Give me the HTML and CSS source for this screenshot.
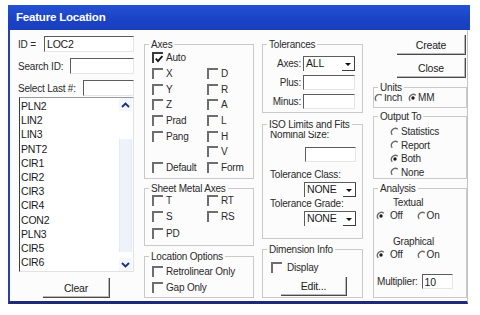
FILE: index.html
```html
<!DOCTYPE html>
<html>
<head>
<meta charset="utf-8">
<title>Feature Location</title>
<link rel="stylesheet" href="styles.css">
</head>
<body>
<div class="window">
  <div class="titlebar">Feature Location</div>
  <div class="client">
    <!-- column 1 -->
    <div class="col col1">
      <div class="field f-id"><span class="lbl">ID =</span><span class="edit w-id">LOC2</span></div>
      <div class="field f-search"><span class="lbl">Search ID:</span><span class="edit w-search"></span></div>
      <div class="field f-last"><span class="lbl">Select Last #:</span><span class="edit w-last"></span></div>
      <div class="listbox">
        <ul class="items">
          <li>PLN2</li><li>LIN2</li><li>LIN3</li><li>PNT2</li><li>CIR1</li><li>CIR2</li>
          <li>CIR3</li><li>CIR4</li><li>CON2</li><li>PLN3</li><li>CIR5</li><li>CIR6</li>
        </ul>
        <div class="scrollbar">
          <span class="sb-btn"><svg width="9" height="6" viewBox="0 0 9 6"><path d="M1 5 L4.5 1.5 L8 5" fill="none" stroke="#1b2f7a" stroke-width="1.8"/></svg></span>
          <span class="sb-track"><span class="sb-thumb"></span></span>
          <span class="sb-btn"><svg width="9" height="6" viewBox="0 0 9 6"><path d="M1 1 L4.5 4.5 L8 1" fill="none" stroke="#1b2f7a" stroke-width="1.8"/></svg></span>
        </div>
      </div>
      <div class="btn btn-clear">Clear</div>
    </div>

    <!-- column 2 -->
    <div class="col col2">
      <div class="group g-axes">
        <span class="legend">Axes</span>
        <div class="cb-grid axes-grid">
          <label class="opt span2"><span class="cb checked"><svg width="8" height="8" viewBox="0 0 8 8"><path d="M0.8 3.6 L3 6.2 L7.4 1" fill="none" stroke="#111" stroke-width="1.8"/></svg></span>Auto</label>
          <label class="opt"><span class="cb"></span>X</label>
          <label class="opt"><span class="cb"></span>D</label>
          <label class="opt"><span class="cb"></span>Y</label>
          <label class="opt"><span class="cb"></span>R</label>
          <label class="opt"><span class="cb"></span>Z</label>
          <label class="opt"><span class="cb"></span>A</label>
          <label class="opt"><span class="cb"></span>Prad</label>
          <label class="opt"><span class="cb"></span>L</label>
          <label class="opt"><span class="cb"></span>Pang</label>
          <label class="opt"><span class="cb"></span>H</label>
          <span class="opt"></span>
          <label class="opt"><span class="cb"></span>V</label>
          <label class="opt"><span class="cb"></span>Default</label>
          <label class="opt"><span class="cb"></span>Form</label>
        </div>
      </div>
      <div class="group g-sheet">
        <span class="legend">Sheet Metal Axes</span>
        <div class="cb-grid sheet-grid">
          <label class="opt"><span class="cb"></span>T</label>
          <label class="opt"><span class="cb"></span>RT</label>
          <label class="opt"><span class="cb"></span>S</label>
          <label class="opt"><span class="cb"></span>RS</label>
          <label class="opt"><span class="cb"></span>PD</label>
        </div>
      </div>
      <div class="group g-loc">
        <span class="legend">Location Options</span>
        <div class="cb-list">
          <label class="opt"><span class="cb"></span>Retrolinear Only</label>
          <label class="opt"><span class="cb"></span>Gap Only</label>
        </div>
      </div>
    </div>

    <!-- column 3 -->
    <div class="col col3">
      <div class="group g-tol">
        <span class="legend">Tolerances</span>
        <div class="tol-grid">
          <span class="rlbl">Axes:</span>
          <span class="combo"><span class="combo-text">ALL</span><span class="combo-btn"><span class="tri"></span></span></span>
          <span class="rlbl">Plus:</span>
          <span class="edit w-tol"></span>
          <span class="rlbl">Minus:</span>
          <span class="edit w-tol"></span>
        </div>
      </div>
      <div class="group g-iso">
        <span class="legend">ISO Limits and Fits</span>
        <div class="iso-body">
          <span class="iso-lbl">Nominal Size:</span>
          <span class="edit w-nom"></span>
          <span class="iso-lbl l-class">Tolerance Class:</span>
          <span class="combo"><span class="combo-text">NONE</span><span class="combo-btn"><span class="tri"></span></span></span>
          <span class="iso-lbl l-grade">Tolerance Grade:</span>
          <span class="combo"><span class="combo-text">NONE</span><span class="combo-btn"><span class="tri"></span></span></span>
        </div>
      </div>
      <div class="group g-dim">
        <span class="legend">Dimension Info</span>
        <label class="opt dim-opt"><span class="cb"></span>Display</label>
        <div class="btn btn-edit">Edit...</div>
      </div>
    </div>

    <!-- column 4 -->
    <div class="col col4">
      <div class="btn btn-side">Create</div>
      <div class="btn btn-side btn-close">Close</div>
      <div class="group g-units">
        <span class="legend">Units</span>
        <div class="units-row">
          <label class="ropt"><span class="rb"><svg width="10" height="10" viewBox="0 0 10 10"><path d="M7.8 2.2 A4 4 0 0 0 2.2 7.8" fill="none" stroke="#6a6a6a" stroke-width="1.3"/></svg></span>Inch</label>
          <label class="ropt r-mm"><span class="rb"><svg width="10" height="10" viewBox="0 0 10 10"><path d="M7.8 2.2 A4 4 0 0 0 2.2 7.8" fill="none" stroke="#6a6a6a" stroke-width="1.3"/><circle cx="5" cy="5" r="1.7" fill="#1a1a1a"/></svg></span>MM</label>
        </div>
      </div>
      <div class="group g-out">
        <span class="legend">Output To</span>
        <div class="out-list">
          <label class="ropt"><span class="rb"><svg width="10" height="10" viewBox="0 0 10 10"><path d="M7.8 2.2 A4 4 0 0 0 2.2 7.8" fill="none" stroke="#6a6a6a" stroke-width="1.3"/></svg></span>Statistics</label>
          <label class="ropt"><span class="rb"><svg width="10" height="10" viewBox="0 0 10 10"><path d="M7.8 2.2 A4 4 0 0 0 2.2 7.8" fill="none" stroke="#6a6a6a" stroke-width="1.3"/></svg></span>Report</label>
          <label class="ropt"><span class="rb"><svg width="10" height="10" viewBox="0 0 10 10"><path d="M7.8 2.2 A4 4 0 0 0 2.2 7.8" fill="none" stroke="#6a6a6a" stroke-width="1.3"/><circle cx="5" cy="5" r="1.7" fill="#1a1a1a"/></svg></span>Both</label>
          <label class="ropt"><span class="rb"><svg width="10" height="10" viewBox="0 0 10 10"><path d="M7.8 2.2 A4 4 0 0 0 2.2 7.8" fill="none" stroke="#6a6a6a" stroke-width="1.3"/></svg></span>None</label>
        </div>
      </div>
      <div class="group g-an">
        <span class="legend">Analysis</span>
        <div class="an-head">Textual</div>
        <div class="an-row">
          <label class="ropt r-off"><span class="rb"><svg width="10" height="10" viewBox="0 0 10 10"><path d="M7.8 2.2 A4 4 0 0 0 2.2 7.8" fill="none" stroke="#6a6a6a" stroke-width="1.3"/><circle cx="5" cy="5" r="1.7" fill="#1a1a1a"/></svg></span>Off</label>
          <label class="ropt r-on"><span class="rb"><svg width="10" height="10" viewBox="0 0 10 10"><path d="M7.8 2.2 A4 4 0 0 0 2.2 7.8" fill="none" stroke="#6a6a6a" stroke-width="1.3"/></svg></span>On</label>
        </div>
        <div class="an-head an-graph">Graphical</div>
        <div class="an-row">
          <label class="ropt r-off"><span class="rb"><svg width="10" height="10" viewBox="0 0 10 10"><path d="M7.8 2.2 A4 4 0 0 0 2.2 7.8" fill="none" stroke="#6a6a6a" stroke-width="1.3"/><circle cx="5" cy="5" r="1.7" fill="#1a1a1a"/></svg></span>Off</label>
          <label class="ropt r-on"><span class="rb"><svg width="10" height="10" viewBox="0 0 10 10"><path d="M7.8 2.2 A4 4 0 0 0 2.2 7.8" fill="none" stroke="#6a6a6a" stroke-width="1.3"/></svg></span>On</label>
        </div>
        <div class="mult-row"><span class="lbl">Multiplier:</span><span class="edit w-mult">10</span></div>
      </div>
    </div>
  </div>
</div>
</body>
</html>
```

FILE: styles.css
```css
* { box-sizing: border-box; }

html, body {
  margin: 0;
  padding: 0;
  background: #ffffff;
}

body {
  font-family: "Liberation Sans", Arial, sans-serif;
  font-size: 10px;
  letter-spacing: -0.2px;
  color: #2a2a2a;
  width: 480px;
  height: 315px;
  overflow: hidden;
  white-space: nowrap;
}

.window {
  margin: 5px 0 0 8px;
  width: 462px;
}

.titlebar {
  height: 25px;
  line-height: 25px;
  padding-left: 8px;
  background: linear-gradient(#2352d2, #1a42c4 60%, #1a3fbd);
  color: #ffffff;
  font-weight: bold;
  font-size: 11.5px;
  letter-spacing: -0.2px;
}

.client {
  display: flex;
  align-items: flex-start;
  width: 460px;
  height: 274px;
  padding: 5px 0 0 7px;
  background: #fcfcfc;
  border-left: 2px solid #2c3fa6;
  border-right: 1px solid #c4c4c4;
  border-bottom: 3px solid #1d2a78;
}

.col { display: flex; flex-direction: column; }
.col1 { width: 117px; }
.col2 { width: 110px; margin-left: 10px; }
.col3 { width: 101px; margin-left: 8px; }
.col4 { width: 94px; margin-left: 10px; }

/* edit boxes */
.edit {
  display: block;
  height: 16px;
  line-height: 14px;
  padding-left: 2px;
  background: #ffffff;
  border-top: 1px solid #5c5c5c;
  border-left: 1px solid #5c5c5c;
  border-right: 1px solid #e6e6e6;
  border-bottom: 1px solid #e6e6e6;
  color: #1a1a1a;
  font-size: 10.5px;
}

.field { display: flex; align-items: center; justify-content: space-between; padding-left: 1px; }
.f-id { margin-top: 1px; }
.f-search, .f-last { margin-top: 6px; }
.w-id { width: 90px; }
.w-search { width: 64px; }
.w-last { width: 51px; }

/* listbox */
.listbox {
  margin: 1px 0 0 2px;
  height: 175px;
  display: flex;
  background: #ffffff;
  border-top: 1px solid #9a9a9a;
  border-left: 1px solid #3e3e3e;
  border-right: 1px solid #e2e2e2;
  border-bottom: 1px solid #e2e2e2;
}

.items {
  list-style: none;
  margin: 0;
  padding: 1px 0 0 1px;
  flex: 1;
  line-height: 14.2px;
  font-size: 10.5px;
  color: #1a1a1a;
}

.scrollbar {
  width: 13px;
  margin-right: 1px;
  display: flex;
  flex-direction: column;
}

.sb-btn {
  height: 13px;
  display: flex;
  align-items: center;
  justify-content: center;
  background: #f3f6fd;
}

.sb-track {
  flex: 1;
  display: flex;
  flex-direction: column;
  padding-top: 28px;
  padding-bottom: 6px;
}

.sb-thumb {
  flex: 1;
  background: #eef2fb;
  border-left: 1px solid #e3e9f6;
  border-right: 1px solid #e3e9f6;
}

/* buttons */
.btn {
  display: flex;
  align-items: center;
  justify-content: center;
  border-right: 1px solid #4a4a4a;
  border-bottom: 1px solid #4a4a4a;
  box-shadow: inset -1px -1px 0 #b8b8b8;
  color: #222;
  font-size: 10.5px;
}

.btn-clear {
  width: 67px;
  height: 20px;
  margin: 6px 0 0 26px;
}

/* group boxes */
.group {
  position: relative;
  border: 1px solid #c9c9c9;
}

.legend {
  position: absolute;
  top: -7px;
  left: 4px;
  padding: 0 2px;
  line-height: 13px;
  background: #fcfcfc;
}

.g-axes { margin-top: 9px; height: 135px; padding: 5px 0 0 7px; }
.g-sheet { margin-top: 9px; height: 58px; padding: 3px 0 0 7px; }
.g-loc { margin-top: 10px; height: 42px; padding: 6px 0 0 7px; }

.cb-grid {
  display: grid;
  grid-template-columns: 55px 1fr;
}

.axes-grid { grid-auto-rows: 15.7px; }
.sheet-grid { grid-auto-rows: 16.5px; }
.cb-list { display: grid; grid-auto-rows: 16px; }

.span2 { grid-column: 1 / 3; }

.opt {
  display: flex;
  align-items: center;
}

.cb {
  width: 11px;
  height: 11px;
  margin-right: 3px;
  flex: none;
  border-top: 2px solid #6e6e6e;
  border-left: 2px solid #6e6e6e;
  display: flex;
  align-items: center;
  justify-content: center;
}

.cb.checked { border-color: #3a3a3a; }

/* column 3 */
.g-tol { margin-top: 9px; height: 69px; padding-top: 11px; }
.tol-grid {
  display: grid;
  grid-template-columns: 38px 52px;
  column-gap: 2px;
  row-gap: 4px;
  grid-auto-rows: 15px;
  align-items: center;
}

.rlbl { text-align: right; }
.w-tol { width: 52px; height: 15px; }

.combo {
  display: flex;
  width: 52px;
  height: 15px;
  background: #ffffff;
  border-top: 1px solid #5c5c5c;
  border-left: 1px solid #5c5c5c;
  color: #1a1a1a;
  font-size: 10.5px;
}

.combo-text { flex: 1; line-height: 13px; padding-left: 2px; }

.combo-btn {
  width: 13px;
  display: flex;
  align-items: center;
  justify-content: center;
  border-right: 1px solid #3e3e3e;
  border-bottom: 1px solid #3e3e3e;
}

.tri {
  width: 0;
  height: 0;
  border-left: 3px solid transparent;
  border-right: 3px solid transparent;
  border-top: 3px solid #111;
  margin-top: 1px;
}

.g-iso { margin-top: 11px; height: 115px; padding: 4px 6px 0 7px; }
.iso-body { display: flex; flex-direction: column; align-items: flex-end; }
.iso-lbl { align-self: flex-start; line-height: 12px; }
.w-nom { width: 51px; height: 15px; margin-top: 6px; }
.l-class { margin-top: 7px; }
.l-grade { margin-top: 1px; }
.iso-body .combo { margin-top: 1px; }

.g-dim { margin-top: 10px; height: 49px; padding: 10px 0 0 8px; }
.dim-opt { height: 14px; }
.dim-opt .cb { margin-right: 5px; }
.btn-edit { width: 66px; height: 19px; margin: 3px 0 0 10px; }

/* column 4 */
.btn-side { width: 69px; height: 20px; align-self: flex-end; margin-right: 1px; }
.btn-close { margin-top: 3px; }

.rb { display: inline-flex; width: 10px; height: 10px; flex: none; }
.ropt { display: flex; align-items: center; height: 13px; }

.g-units { margin-top: 9px; height: 21px; padding: 3px 0 0 0; }
.units-row { display: flex; }
.r-mm { margin-left: 6px; }

.g-out { margin-top: 8px; height: 63px; padding: 8px 0 0 16px; }
.out-list { display: grid; grid-auto-rows: 13.5px; }
.out-list .rb { margin-right: 1px; }

.g-an { margin-top: 9px; height: 110px; padding: 8px 0 0 2px; }
.an-head { line-height: 12px; padding-left: 17px; }
.an-graph { margin-top: 14px; }
.an-row { display: flex; height: 13px; }
.r-off .rb { margin-right: 4px; }
.r-on { margin-left: 14px; }
.mult-row { display: flex; align-items: center; margin-top: 13px; padding-left: 1px; }
.w-mult { width: 31px; height: 15px; margin-left: 4px; }
```
